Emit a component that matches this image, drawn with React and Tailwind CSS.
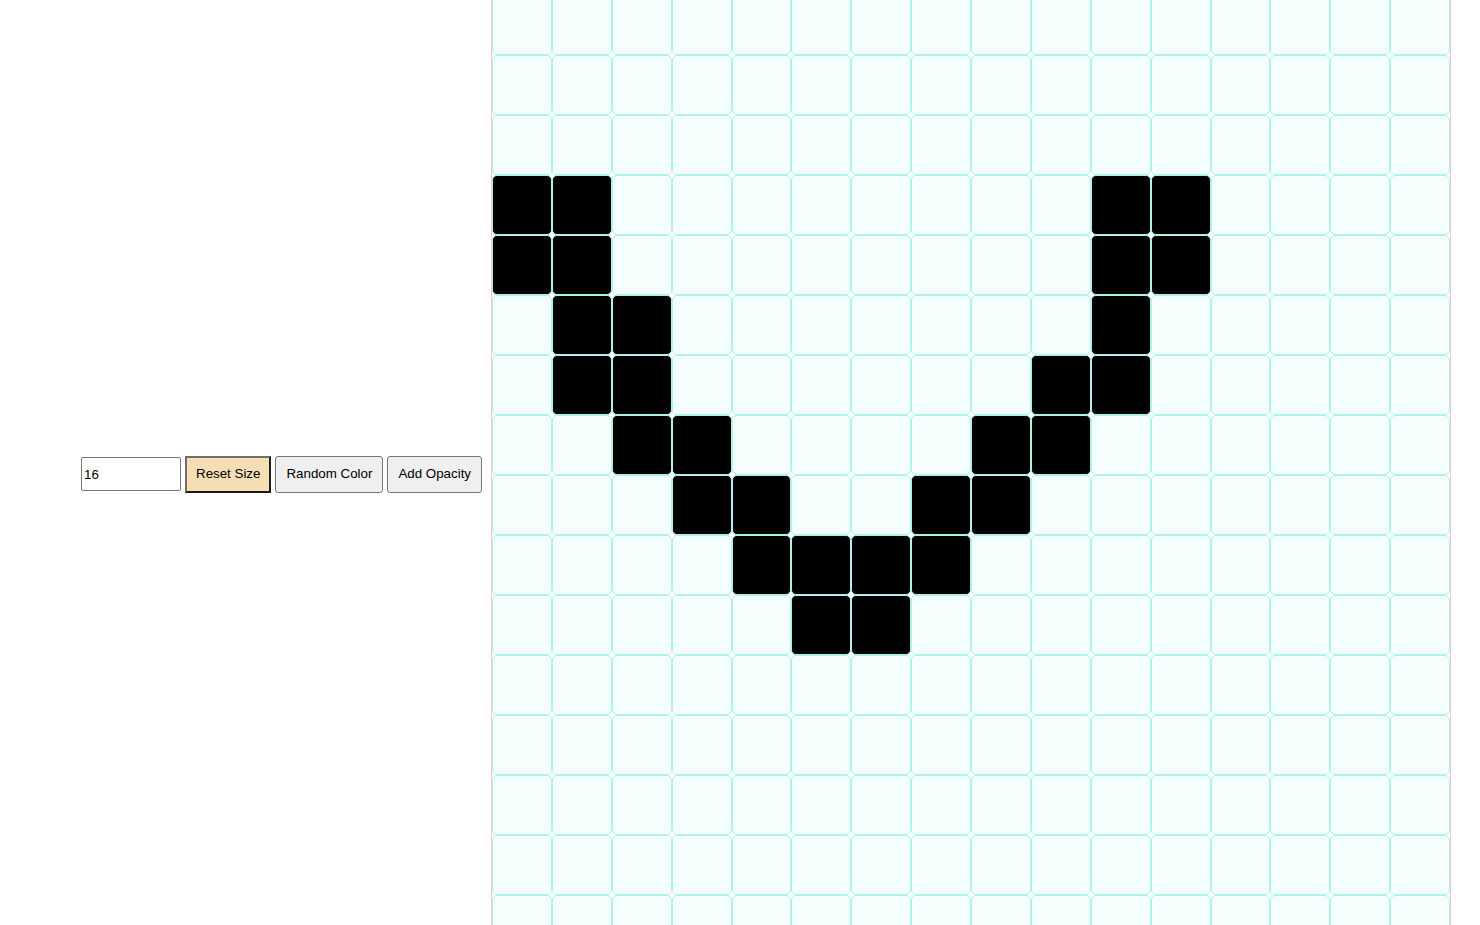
import React from "react";

const SIZE = 16;

// cells that are filled in, as [row, col]
const filled = [
  [3, 0], [3, 1], [3, 10], [3, 11],
  [4, 0], [4, 1], [4, 10], [4, 11],
  [5, 1], [5, 2], [5, 10],
  [6, 1], [6, 2], [6, 9], [6, 10],
  [7, 2], [7, 3], [7, 8], [7, 9],
  [8, 3], [8, 4], [8, 7], [8, 8],
  [9, 4], [9, 5], [9, 6], [9, 7],
  [10, 5], [10, 6],
];

const isFilled = (r, c) => filled.some(([fr, fc]) => fr === r && fc === c);

export default function App() {
  const cells = [];
  for (let r = 0; r < SIZE; r++) {
    for (let c = 0; c < SIZE; c++) {
      cells.push(
        <div
          key={`${r}-${c}`}
          className={`border border-[#aef3eb] rounded-[5px] ${
            isFilled(r, c) ? "bg-black" : "bg-[#f4fffd]"
          }`}
        />
      );
    }
  }

  return (
    <div
      className="h-[925px] overflow-hidden bg-white"
      style={{ fontFamily: '"Liberation Sans", Arial, sans-serif' }}
    >
      <div className="flex items-center pl-[81px] gap-[9px] -mt-[6px]">
        <div className="flex items-center gap-[4px] mb-[2px] text-[13.33px] text-black">
          <input
            defaultValue="16"
            className="w-[100px] h-[34px] px-[2px] border border-[#767676] rounded-[2px] bg-white outline-none"
          />
          <button className="h-[37px] px-[9px] bg-[#f5deb3] border-2 border-t-[#6e6e6e] border-l-[#6e6e6e] border-r-[#1c1c1c] border-b-[#1c1c1c]">
            Reset Size
          </button>
          <button className="h-[37px] px-[10px] bg-[#efefef] border border-[#767676] rounded-[3px]">
            Random Color
          </button>
          <button className="h-[37px] px-[10px] bg-[#efefef] border border-[#767676] rounded-[3px]">
            Add Opacity
          </button>
        </div>
        <div className="w-[960px] shrink-0 border border-[#ffc0cb] bg-white grid grid-cols-16 grid-rows-[repeat(16,60px)]">
          {cells}
        </div>
      </div>
    </div>
  );
}
